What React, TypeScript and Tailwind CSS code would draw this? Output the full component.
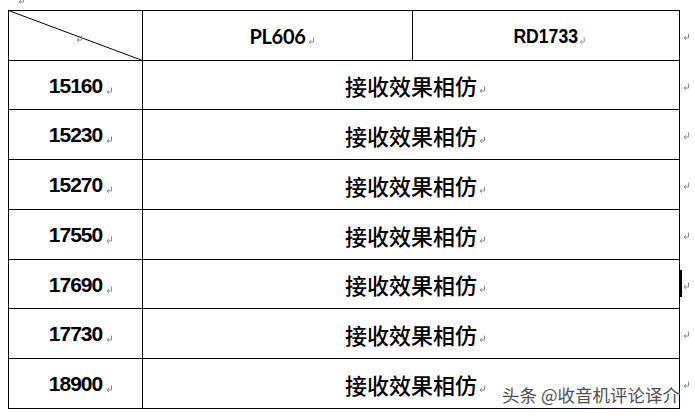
import React from "react";

function Mark({ className = "" }: { className?: string }) {
  return (
    <svg width="7" height="8" viewBox="0 0 7 8" className={className}>
      <path d="M5.5 0.5 V5 H1.2" fill="none" stroke="#8c8c8c" strokeWidth="1" />
      <path d="M3 3.2 L1 5 L3 6.8" fill="none" stroke="#8c8c8c" strokeWidth="1" />
    </svg>
  );
}

const rows = [
  { id: "15160", h: "h-[49px]" },
  { id: "15230", h: "h-[50px]" },
  { id: "15270", h: "h-[50px]" },
  { id: "17550", h: "h-[50px]" },
  { id: "17690", h: "h-[49px]" },
  { id: "17730", h: "h-[50px]" },
  { id: "18900", h: "h-[50px]" },
];

export default function App() {
  return (
    <div className="relative w-[695px] h-[419px] bg-white overflow-hidden pl-[8px] pt-[10px]">
      <Mark className="absolute left-[18px] top-[-3px]" />
      <div className="flex flex-col">
        {/* header */}
        <div className="flex items-center">
          <div className="relative w-[135px] h-[51px] border-l border-t border-r border-b border-black">
            <svg
              className="absolute left-[-1px] top-[-1px]"
              width="135"
              height="51"
              viewBox="0 0 135 51"
            >
              <line x1="0.5" y1="0.5" x2="134.5" y2="50.5" stroke="#000" strokeWidth="1" />
            </svg>
            <Mark className="absolute left-[67px] top-[24px]" />
          </div>
          <div className="w-[270px] h-[51px] border-t border-r border-b border-black flex items-center justify-center">
            <span className="relative font-['Lato',sans-serif] font-bold text-[20px] leading-none tracking-[-0.3px] text-black pt-[1px]">
              PL606
              <Mark className="absolute left-full ml-[2px] bottom-[1px]" />
            </span>
          </div>
          <div className="w-[267px] h-[51px] border-t border-r border-b border-black flex items-center justify-center">
            <span className="relative inline-block font-['Liberation_Sans',Arial,sans-serif] font-bold text-[20px] leading-none text-black scale-x-[0.88] pt-[1px]">
              RD1733
              <Mark className="absolute left-full ml-[2px] bottom-[1px]" />
            </span>
          </div>
          <Mark className="ml-[3px] mt-[2px]" />
        </div>
        {rows.map((r) => (
          <div key={r.id} className="flex items-center">
            <div
              className={`w-[135px] ${r.h} border-l border-r border-b border-black flex items-center justify-center`}
            >
              <span className="relative font-['Liberation_Sans',Arial,sans-serif] font-bold text-[21px] leading-none tracking-[-1px] text-black">
                {r.id}
                <Mark className="absolute left-full ml-[4px] bottom-[1px]" />
              </span>
            </div>
            <div
              className={`w-[537px] ${r.h} border-r border-b border-black flex items-center justify-center`}
            >
              <span className="relative font-['Noto_Sans_CJK_SC',sans-serif] font-medium text-[22px] leading-none text-black">
                接收效果相仿
                <Mark className="absolute left-full ml-[2px] bottom-[2px]" />
              </span>
            </div>
            <Mark className="ml-[3px] mt-[2px]" />
          </div>
        ))}
      </div>
      <div className="absolute left-[679px] top-[270px] w-[3px] h-[27px] bg-black" />
      <div className="absolute left-[502px] top-[386px] font-['Noto_Sans_CJK_SC',sans-serif] text-[17.5px] leading-none text-[#505050] whitespace-nowrap [text-shadow:0_0_2px_#fff,0_0_1px_#fff]">
        头条 @收音机评论译介
      </div>
    </div>
  );
}
